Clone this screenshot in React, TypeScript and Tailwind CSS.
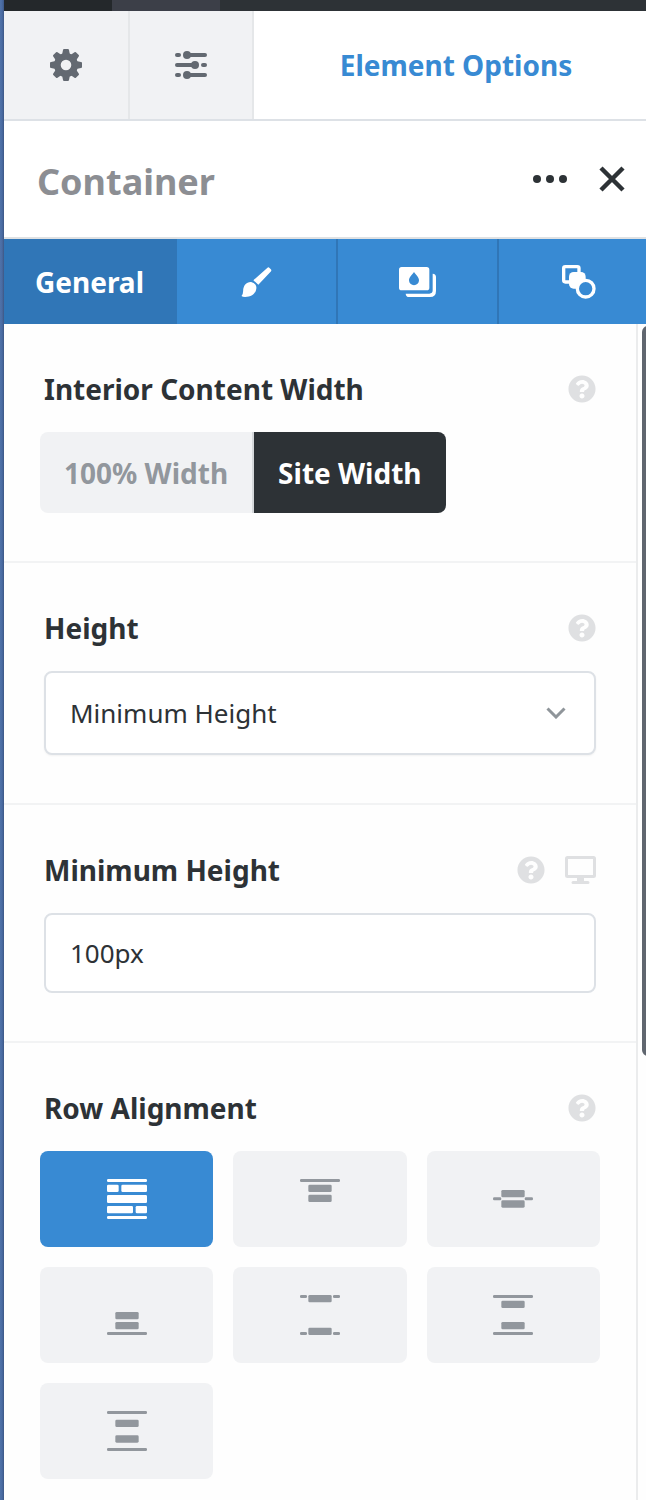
import { useState } from 'react';
import type { ReactNode } from 'react';
import { FaQuestionCircle } from 'react-icons/fa';

// Each bar is [x, y, width, height] on a 120 x 120 grid
type Bar = [number, number, number, number];

const alignments: { id: string; label: string; bars: Bar[] }[] = [
  {
    id: 'stretch',
    label: 'Stretch',
    bars: [
      [0, 0, 120, 9], [0, 17, 35, 22], [43, 17, 77, 22], [0, 48, 120, 24],
      [0, 81, 78, 22], [86, 81, 34, 22], [0, 111, 120, 9],
    ],
  },
  { id: 'flex-start', label: 'Flex Start', bars: [[0, 0, 120, 9], [25, 17, 70, 22], [25, 47, 70, 22]] },
  { id: 'center', label: 'Center', bars: [[0, 55, 25, 9], [95, 55, 25, 9], [25, 33, 70, 22], [25, 64, 70, 22]] },
  { id: 'flex-end', label: 'Flex End', bars: [[25, 51, 70, 22], [25, 81, 70, 22], [0, 111, 120, 9]] },
  {
    id: 'space-between',
    label: 'Space Between',
    bars: [[0, 0, 21, 9], [99, 0, 21, 9], [25, 0, 70, 22], [25, 98, 70, 22], [0, 111, 21, 9], [99, 111, 21, 9]],
  },
  {
    id: 'space-around',
    label: 'Space Around',
    bars: [[0, 0, 120, 9], [25, 17, 70, 22], [25, 81, 70, 22], [0, 111, 120, 9]],
  },
  {
    id: 'space-evenly',
    label: 'Space Evenly',
    bars: [[0, 0, 120, 9], [25, 26, 70, 22], [25, 73, 70, 22], [0, 111, 120, 9]],
  },
];

const widths = ['100% Width', 'Site Width'];

function GearIcon() {
  return (
    <svg viewBox="0 0 32 32" className="size-8" fill="currentColor" aria-hidden="true">
      <path
        fillRule="evenodd"
        d="M16 4a12 12 0 1 0 0 24a12 12 0 0 0 0-24zM16 10.700a5.300 5.300 0 1 1 0 10.600a5.300 5.300 0 0 1 0-10.600z"
      />
      {[0, 45, 90, 135, 180, 225, 270, 315].map(a => (
        <path key={a} transform={`rotate(${a} 16 16)`} d="M11.800 7l1.200-6q.2-1 1-1h4q.8 0 1 1l1.200 6z" />
      ))}
    </svg>
  );
}

function SlidersIcon() {
  return (
    <svg viewBox="0 0 32 32" className="size-8" fill="currentColor" aria-hidden="true">
      <rect x="0" y="4" width="6" height="4" rx="2" />
      <rect x="10" y="4" width="22" height="4" rx="2" />
      <circle cx="12" cy="6" r="4" />
      <rect x="0" y="14" width="22" height="4" rx="2" />
      <circle cx="20" cy="16" r="4" />
      <rect x="26" y="14" width="6" height="4" rx="2" />
      <rect x="0" y="24" width="6" height="4" rx="2" />
      <rect x="10" y="24" width="22" height="4" rx="2" />
      <circle cx="12" cy="26" r="4" />
    </svg>
  );
}

function BrushIcon() {
  return (
    <svg viewBox="0 0 93 91" className="h-[30px] w-[31px]" fill="currentColor" aria-hidden="true">
      <path d="M79 3q4-4 7 0l4 4q3 3 0 7L52 54L37 40z" />
      <path d="M32 46Q38 47 43 53Q47 58 46 65C44 82 30 91 12 91Q4 91 1 88Q6 82 6 73C6 56 17 44 32 46z" />
    </svg>
  );
}

function LayersIcon() {
  return (
    <svg viewBox="0 0 111 90" className="h-[30px] w-[37px]" fill="currentColor" aria-hidden="true">
      <path
        fillRule="evenodd"
        d="M8 0H83Q91 0 91 8V62Q91 70 83 70H8Q0 70 0 62V8Q0 0 8 0zM45 15C38 25 30 31 30 40A15 15 0 0 0 60 40C60 31 52 25 45 15z"
      />
      <path d="M101 20Q111 21 111 30V72Q111 90 93 90H30Q21 90 20 80H91Q101 80 101 70z" />
    </svg>
  );
}

function EffectsIcon() {
  return (
    <svg viewBox="0 0 102 102" className="size-[34px]" aria-hidden="true">
      <rect x="5" y="5" width="46" height="46" rx="5" fill="none" stroke="currentColor" strokeWidth="10" />
      <rect x="21" y="21" width="50" height="50" rx="14" fill="currentColor" />
      <circle cx="71" cy="71" r="25" fill="#388ad3" stroke="currentColor" strokeWidth="10" />
    </svg>
  );
}

function MonitorIcon() {
  return (
    <svg viewBox="0 0 31 28" className="h-7 w-[31px]" aria-hidden="true">
      <rect x="1.500" y="1.500" width="28" height="19" rx="1" fill="none" stroke="currentColor" strokeWidth="3" />
      <path fill="currentColor" d="M12 22h7v3h4a1.300 1.300 0 0 1 0 3H8a1.300 1.300 0 0 1 0-3h4z" />
    </svg>
  );
}

function AlignIcon({ bars }: { bars: Bar[] }) {
  return (
    <svg viewBox="0 0 120 120" className="size-10" fill="currentColor" aria-hidden="true">
      {bars.map(([x, y, w, h]) => (
        <rect key={`${x}-${y}`} x={x} y={y} width={w} height={h} rx="4" />
      ))}
    </svg>
  );
}

interface OptionProps {
  label: string;
  htmlFor?: string;
  responsive?: boolean;
  children: ReactNode;
}

function Option({ label, htmlFor, responsive, children }: OptionProps) {
  return (
    <section className="border-b-2 border-[#f2f3f4] px-9 py-12">
      <div className="mb-[26px] flex h-[34px] items-center justify-between px-1">
        {htmlFor ? (
          <label htmlFor={htmlFor} className="text-[28px] font-bold">{label}</label>
        ) : (
          <h3 className="text-[28px] font-bold">{label}</h3>
        )}
        <div className="flex items-center gap-5 text-[#dfe0e2]">
          <button type="button" aria-label={`${label} help`}>
            <FaQuestionCircle size={28} />
          </button>
          {responsive && (
            <button type="button" aria-label="Responsive view">
              <MonitorIcon />
            </button>
          )}
        </div>
      </div>
      {children}
    </section>
  );
}

export default function App() {
  const [width, setWidth] = useState('Site Width');
  const [alignment, setAlignment] = useState('stretch');

  return (
    <div className="flex h-screen overflow-hidden bg-[#fefefe] font-['Noto_Sans',sans-serif] leading-none text-[#2d3236]">
      <div className="w-1 shrink-0 bg-linear-to-r from-[#5072a8] via-[#4a6ca3] to-[#3d5785]" />

      {/* The panel runs slightly past the right edge of the window */}
      <div className="-mr-3 flex min-w-0 flex-1 flex-col">
        <div className="flex h-[11px] shrink-0 bg-[#2d3236]">
          <div className="w-27 bg-[#24282b]" />
          <div className="w-27 bg-[#3c3f48]" />
        </div>

        {/* Top tabs */}
        <header className="flex h-[110px] shrink-0 border-b-2 border-[#dde1e6] bg-white">
          <button type="button" aria-label="Settings" className="flex w-[126px] items-center justify-center border-r-2 border-[#e5e7e9] bg-[#f1f2f4] text-[#636971]">
            <GearIcon />
          </button>
          <button type="button" aria-label="Preferences" className="flex w-[124px] items-center justify-center border-r-2 border-[#e5e7e9] bg-[#f1f2f4] text-[#636971]">
            <SlidersIcon />
          </button>
          <button type="button" className="flex-1 text-[28px] font-bold text-[#388ad3]">
            Element Options
          </button>
        </header>

        {/* Element title */}
        <div className="flex h-[118px] shrink-0 items-center justify-between border-b-2 border-[#dfe1e3] bg-white px-[33px]">
          <h2 className="pt-1.5 text-4xl font-bold text-[#8c8e93]">Container</h2>
          <div className="flex items-center gap-8">
            <button type="button" aria-label="More options">
              <svg viewBox="0 0 34 8" className="h-2 w-[34px]" fill="currentColor" aria-hidden="true">
                <circle cx="4" cy="4" r="4" />
                <circle cx="17" cy="4" r="4" />
                <circle cx="30" cy="4" r="4" />
              </svg>
            </button>
            <button type="button" aria-label="Close">
              <svg viewBox="0 0 26 26" className="size-[26px]" stroke="currentColor" strokeWidth="4.500" aria-hidden="true">
                <path d="M2 2l22 22M24 2L2 24" />
              </svg>
            </button>
          </div>
        </div>

        {/* Option tabs */}
        <nav className="flex h-[85px] shrink-0 bg-[#388ad3] text-white">
          <button type="button" className="w-[173px] bg-[#3076b7] pr-0.5 text-[28px] font-bold">General</button>
          <button type="button" aria-label="Design" className="flex flex-1 items-center justify-center border-r-2 border-[#3076b7]">
            <BrushIcon />
          </button>
          <button type="button" aria-label="Background" className="flex flex-1 items-center justify-center border-r-2 border-[#3076b7]">
            <LayersIcon />
          </button>
          <button type="button" aria-label="Extras" className="flex flex-1 items-center justify-center">
            <EffectsIcon />
          </button>
        </nav>

        <div className="flex min-h-0 flex-1">
          <div className="min-w-0 flex-1 overflow-hidden border-r-2 border-[#ebeced]">
            <Option label="Interior Content Width">
              <div className="flex h-[81px] w-fit overflow-hidden rounded-lg">
                {widths.map(w => (
                  <button
                    key={w}
                    type="button"
                    aria-pressed={width === w}
                    onClick={() => setWidth(w)}
                    className={`border-[#d5d8db] px-6 text-[28px] font-bold first:border-r-2 ${
                      width === w ? 'bg-[#2d3236] text-white' : 'bg-[#f1f2f4] text-[#92979d]'
                    }`}
                  >
                    {w}
                  </button>
                ))}
              </div>
            </Option>

            <Option label="Height" htmlFor="height">
              <div className="relative mx-1">
                <select
                  id="height"
                  defaultValue="min"
                  className="block h-[84px] w-full appearance-none rounded-lg border-2 border-[#dde1e6] bg-white px-6 text-[26px] leading-normal shadow-xs"
                >
                  <option value="auto">Auto</option>
                  <option value="full">Full Height</option>
                  <option value="min">Minimum Height</option>
                </select>
                <svg viewBox="0 0 20 12" className="pointer-events-none absolute top-9 right-[30px] h-3 w-5 text-[#8f959a]" fill="none" stroke="currentColor" strokeWidth="3" aria-hidden="true">
                  <path d="M1.500 1.500L10 10l8.500-8.500" />
                </svg>
              </div>
            </Option>

            <Option label="Minimum Height" htmlFor="min-height" responsive>
              <div className="mx-1">
                <input
                  id="min-height"
                  type="text"
                  defaultValue="100px"
                  className="block h-20 w-full rounded-lg border-2 border-[#dde1e6] bg-white px-6 text-[26px] leading-normal"
                />
              </div>
            </Option>

            <Option label="Row Alignment">
              <div className="grid grid-cols-3 gap-5">
                {alignments.map(({ id, label, bars }) => (
                  <button
                    key={id}
                    type="button"
                    aria-label={label}
                    aria-pressed={alignment === id}
                    onClick={() => setAlignment(id)}
                    className={`flex h-24 items-center justify-center rounded-lg ${
                      alignment === id ? 'bg-[#388ad3] text-white' : 'bg-[#f1f2f4] text-[#92979d]'
                    }`}
                  >
                    <AlignIcon bars={bars} />
                  </button>
                ))}
              </div>
            </Option>
          </div>

          {/* Scrollbar */}
          <div className="w-5 shrink-0 px-1 pt-0.5">
            <div className="h-[730px] rounded-md bg-[#60666f]" />
          </div>
        </div>
      </div>
    </div>
  );
}
